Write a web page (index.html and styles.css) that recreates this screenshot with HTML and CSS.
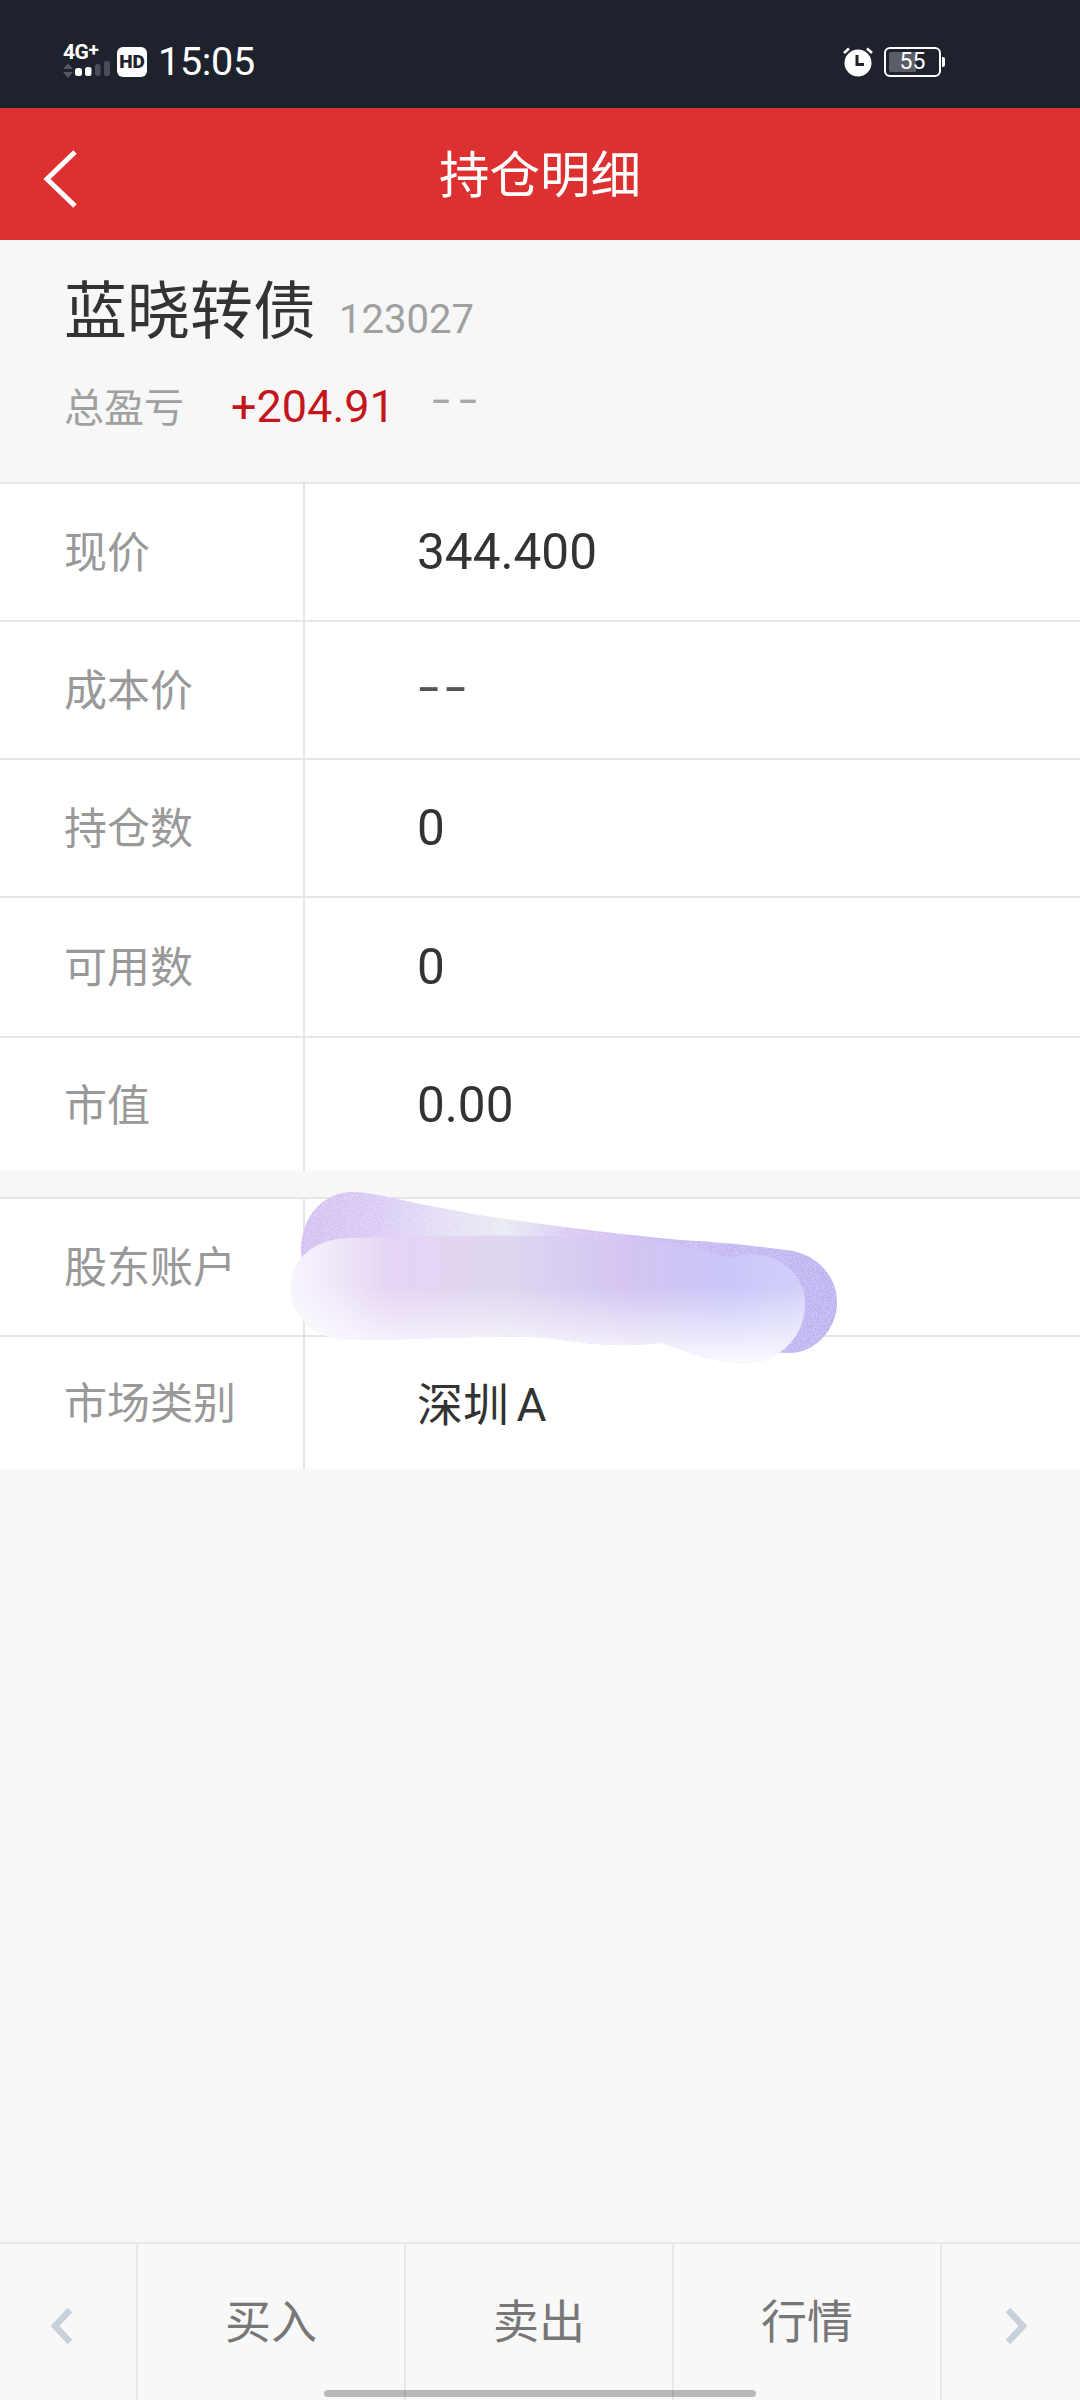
FILE: index.html
```html
<!DOCTYPE html>
<html lang="zh-CN">
<head>
<meta charset="UTF-8">
<meta name="viewport" content="width=device-width, initial-scale=1.0">
<title>持仓明细</title>
<link rel="stylesheet" href="styles.css">
</head>
<body>
  <div class="page">
    <!-- status bar -->
    <div class="statusbar">
      <div class="net">
        <span class="net-label">4G<sup>+</sup></span>
        <svg class="net-bars" width="50" height="20" viewBox="0 0 50 20">
          <path d="M0 6 L5 0.5 L10 6 Z M0 9 L5 15 L10 9 Z" fill="#555862" transform="translate(0 5)"/>
          <rect x="12" y="10" width="7" height="8" rx="2.5" fill="#fff"/>
          <rect x="22" y="9" width="6.5" height="9" rx="2.5" fill="#fff"/>
          <rect x="32" y="6" width="5.5" height="12" rx="2.5" fill="#4a4e58"/>
          <rect x="41" y="3" width="6" height="15" rx="2.5" fill="#4a4e58"/>
        </svg>
      </div>
      <span class="hd">HD</span>
      <span class="time">15:05</span>
      <div class="status-right">
        <svg class="alarm" width="32" height="30" viewBox="0 0 32 30">
          <circle cx="16" cy="16" r="13.5" fill="#fff"/>
          <path d="M15 8 V17.5 H22" fill="none" stroke="#1e222d" stroke-width="3"/>
          <path d="M2 6 L7 1.5 M30 6 L25 1.5" stroke="#fff" stroke-width="2.6" fill="none"/>
        </svg>
        <div class="battery">
          <div class="battery-fill"></div>
          <span class="battery-text">55</span>
        </div>
        <div class="battery-nib"></div>
      </div>
    </div>

    <!-- header -->
    <div class="header">
      <svg class="back" width="36" height="60" viewBox="0 0 36 60">
        <path d="M33 3 L5 30 L33 57" fill="none" stroke="#fff" stroke-width="5"/>
      </svg>
      <h1 class="title">持仓明细</h1>
    </div>

    <!-- stock summary -->
    <div class="summary">
      <div class="stock">
        <span class="stock-name">蓝晓转债</span>
        <span class="stock-code">123027</span>
      </div>
      <div class="profit">
        <span class="profit-label">总盈亏</span>
        <span class="profit-value">+204.91</span>
        <span class="profit-rate">--</span>
      </div>
    </div>

    <div class="group">
      <div class="row"><div class="label">现价</div><div class="value">344.400</div></div>
      <div class="row"><div class="label">成本价</div><div class="value dashes">--</div></div>
      <div class="row"><div class="label">持仓数</div><div class="value">0</div></div>
      <div class="row tall"><div class="label">可用数</div><div class="value">0</div></div>
      <div class="row short"><div class="label">市值</div><div class="value">0.00</div></div>
    </div>

    <div class="group second">
      <div class="row"><div class="label">股东账户</div><div class="value"></div></div>
      <div class="row short-last"><div class="label">市场类别</div><div class="value value-cn">深圳 A</div></div>
    </div>

    <div class="spacer"></div>

    <!-- bottom actions -->
    <div class="toolbar">
      <div class="arrow-cell arrow-left">
        <svg width="22" height="36" viewBox="0 0 22 36"><path d="M19 2 L4 18 L19 34" fill="none" stroke="#c8d1d9" stroke-width="6.5"/></svg>
      </div>
      <div class="action">买入</div>
      <div class="action">卖出</div>
      <div class="action">行情</div>
      <div class="arrow-cell arrow-right">
        <svg width="22" height="36" viewBox="0 0 22 36"><path d="M3 2 L18 18 L3 34" fill="none" stroke="#c8d1d9" stroke-width="6.5"/></svg>
      </div>
    </div>

    <div class="homebar"></div>

    <!-- smudge drawn over the account number -->
    <svg class="smudge" width="580" height="200" viewBox="280 1180 580 200">
      <defs>
        <linearGradient id="backFill" x1="0" y1="0" x2="1" y2="0">
          <stop offset="0" stop-color="#d0bdf1"/>
          <stop offset="0.14" stop-color="#d8c8f5"/>
          <stop offset="0.26" stop-color="#e3dbf6"/>
          <stop offset="0.38" stop-color="#e8eaf2"/>
          <stop offset="0.5" stop-color="#d8c6f5"/>
          <stop offset="0.7" stop-color="#c6b6f2"/>
          <stop offset="1" stop-color="#b9aff0"/>
        </linearGradient>
        <linearGradient id="frontFill" x1="0" y1="0" x2="1" y2="0">
          <stop offset="0" stop-color="#ece4f9"/>
          <stop offset="0.2" stop-color="#e5d4f4"/>
          <stop offset="0.42" stop-color="#dfd6f0"/>
          <stop offset="0.66" stop-color="#d3c4f2"/>
          <stop offset="0.85" stop-color="#c9c6f8"/>
          <stop offset="1" stop-color="#d2d0fa"/>
        </linearGradient>
        <linearGradient id="frontFade" x1="0" y1="0" x2="0" y2="1">
          <stop offset="0.4" stop-color="#fff" stop-opacity="0"/>
          <stop offset="1" stop-color="#fff" stop-opacity="0.92"/>
        </linearGradient>
        <linearGradient id="leftFade" x1="0" y1="0" x2="1" y2="0">
          <stop offset="0" stop-color="#fff" stop-opacity="0.6"/>
          <stop offset="0.18" stop-color="#fff" stop-opacity="0"/>
        </linearGradient>
        <filter id="grain" x="0" y="0" width="100%" height="100%">
          <feTurbulence type="fractalNoise" baseFrequency="0.9" numOctaves="2" seed="4" result="noise"/>
          <feColorMatrix in="noise" type="matrix" values="0 0 0 0 1  0 0 0 0 1  0 0 0 0 1  0 0 0 0.9 -0.35" result="specks"/>
          <feComposite in="specks" in2="SourceGraphic" operator="in" result="clipped"/>
          <feMerge><feMergeNode in="SourceGraphic"/><feMergeNode in="clipped"/></feMerge>
        </filter>
      </defs>
      <path filter="url(#grain)" fill="url(#backFill)" d="M301 1250 C301 1215 325 1192 352 1192 C368 1192 390 1197 420 1204 C510 1222 600 1232 681 1240 C720 1242 755 1246 785 1250 C815 1252 837 1275 837 1302 C837 1330 815 1353 789 1353 C760 1353 720 1345 681 1340 L340 1320 C315 1310 301 1280 301 1250 Z"/>
      <path fill="url(#frontFill)" d="M291 1288 C291 1258 315 1238 352 1238 C450 1235 570 1234 640 1240 C668 1242 700 1250 731 1258 C738 1255 746 1254 754 1254 C784 1256 805 1278 805 1303 C805 1338 778 1363 745 1363 C715 1363 690 1353 662 1343 C640 1345 617 1346 597 1344 C570 1342 550 1337 528 1337 C470 1336 410 1340 352 1340 C315 1340 291 1318 291 1288 Z"/>
      <path fill="url(#frontFade)" d="M291 1288 C291 1258 315 1238 352 1238 C450 1235 570 1234 640 1240 C668 1242 700 1250 731 1258 C738 1255 746 1254 754 1254 C784 1256 805 1278 805 1303 C805 1338 778 1363 745 1363 C715 1363 690 1353 662 1343 C640 1345 617 1346 597 1344 C570 1342 550 1337 528 1337 C470 1336 410 1340 352 1340 C315 1340 291 1318 291 1288 Z"/>
      <path fill="url(#leftFade)" d="M291 1288 C291 1258 315 1238 352 1238 C450 1235 570 1234 640 1240 C668 1242 700 1250 731 1258 C738 1255 746 1254 754 1254 C784 1256 805 1278 805 1303 C805 1338 778 1363 745 1363 C715 1363 690 1353 662 1343 C640 1345 617 1346 597 1344 C570 1342 550 1337 528 1337 C470 1336 410 1340 352 1340 C315 1340 291 1318 291 1288 Z"/>
    </svg>
  </div>
</body>
</html>
```

FILE: styles.css
```css
* {
  box-sizing: border-box;
}

body {
  margin: 0;
  background-color: #f7f7f7;
  font-family: Roboto, "Noto Sans CJK SC", sans-serif;
}

.page {
  position: relative;
  display: flex;
  flex-direction: column;
  width: 1080px;
  height: 2400px;
  overflow: hidden;
}

/* status bar */
.statusbar {
  display: flex;
  align-items: center;
  height: 108px;
  padding: 15px 0 0 63px;
  background-color: #1e222d;
  color: #fff;
}

.net {
  display: flex;
  flex-direction: column;
  width: 50px;
  height: 32px;
  margin-right: 4px;
}

.net-label {
  height: 12px;
  font-size: 21px;
  font-weight: 700;
  line-height: 13px;
  letter-spacing: -0.5px;
}

.net-label sup {
  font-size: 19px;
  line-height: 0;
  vertical-align: 3px;
}

.hd {
  width: 30px;
  height: 30px;
  border-radius: 6px;
  background-color: #fff;
  color: #1e222d;
  font-size: 19px;
  font-weight: 900;
  line-height: 30px;
  text-align: center;
}

.time {
  margin-left: 11px;
  font-size: 39.5px;
  line-height: 46px;
  letter-spacing: -0.3px;
}

.status-right {
  display: flex;
  align-items: center;
  margin-left: auto;
  margin-right: 135px;
}

.alarm {
  margin-right: 10px;
}

.battery {
  position: relative;
  width: 57px;
  height: 30px;
  padding: 3px;
  border: 2px solid #fff;
  border-radius: 6px;
}

.battery-fill {
  width: 27px;
  height: 100%;
  border-radius: 2px 0 0 2px;
  background-color: #5b5e67;
}

.battery-text {
  position: absolute;
  top: 0;
  left: 0;
  width: 100%;
  font-size: 23px;
  line-height: 26px;
  text-align: center;
}

.battery-nib {
  width: 3px;
  height: 10px;
  margin-left: 1px;
  border-radius: 0 2px 2px 0;
  background-color: #fff;
}

/* header */
.header {
  position: relative;
  display: flex;
  align-items: center;
  justify-content: center;
  height: 132px;
  background-color: #dc3031;
}

.back {
  position: absolute;
  top: 41px;
  left: 42px;
}

.title {
  margin: 0;
  padding-top: 3px;
  color: #fff;
  font-size: 50.5px;
  font-weight: 400;
  line-height: 129px;
}

/* stock summary */
.summary {
  height: 242px;
  padding: 34px 0 0 64px;
  background-color: #f7f7f7;
}

.stock {
  display: flex;
  align-items: baseline;
  height: 76px;
}

.stock-name {
  color: #333;
  font-size: 63px;
  line-height: 76px;
}

.stock-code {
  margin-left: 23px;
  color: #a0a0a0;
  font-size: 40px;
}

.profit {
  display: flex;
  align-items: baseline;
  height: 56px;
  margin-top: 22px;
}

.profit-label {
  color: #a0a0a0;
  font-size: 40px;
  line-height: 56px;
}

.profit-value {
  margin-left: 47px;
  color: #c4161c;
  font-size: 45px;
}

.profit-rate {
  margin-left: 37px;
  color: #a8a8a8;
  font-size: 66px;
  font-weight: 300;
  line-height: 56px;
  letter-spacing: 8px;
}

/* detail rows */
.group {
  background-color: #fff;
}

.second {
  margin-top: 26px;
}

.row {
  display: flex;
  height: 138px;
  border-top: 2px solid #e5e5e5;
}

.tall {
  height: 140px;
}

.short {
  height: 135px;
}

.short-last {
  height: 134px;
}

.label {
  display: flex;
  align-items: center;
  width: 305px;
  padding: 0 0 6px 64px;
  border-right: 2px solid #e5e5e5;
  color: #999;
  font-size: 43px;
}

.value {
  display: flex;
  align-items: center;
  padding-left: 112px;
  color: #333;
  font-size: 49.5px;
}

.value-cn {
  padding-bottom: 5px;
  font-size: 46px;
  word-spacing: -4px;
}

.dashes {
  padding: 0 0 6px 113px;
  color: #555;
  font-size: 76px;
  font-weight: 300;
  letter-spacing: 5px;
}

.spacer {
  flex: 1;
}

/* bottom actions */
.toolbar {
  display: flex;
  height: 158px;
  border-top: 2px solid #e8e8e8;
  background-color: #f8f8f8;
}

.arrow-cell {
  display: flex;
  align-items: center;
  justify-content: center;
  width: 136px;
  padding-top: 7px;
}

.arrow-left {
  padding-right: 12px;
}

.arrow-right {
  flex: 1;
  padding-left: 10px;
}

.action {
  width: 268px;
  border-left: 2px solid #e8e8e8;
  color: #777;
  font-size: 46px;
  line-height: 156px;
  text-align: center;
}

.action:nth-child(4) {
  width: 270px;
  border-right: 2px solid #e8e8e8;
}

.homebar {
  position: absolute;
  bottom: 3px;
  left: 324px;
  width: 432px;
  height: 7px;
  border-radius: 4px;
  background-color: rgba(0, 0, 0, 0.26);
}

.smudge {
  position: absolute;
  top: 1180px;
  left: 280px;
}
```
